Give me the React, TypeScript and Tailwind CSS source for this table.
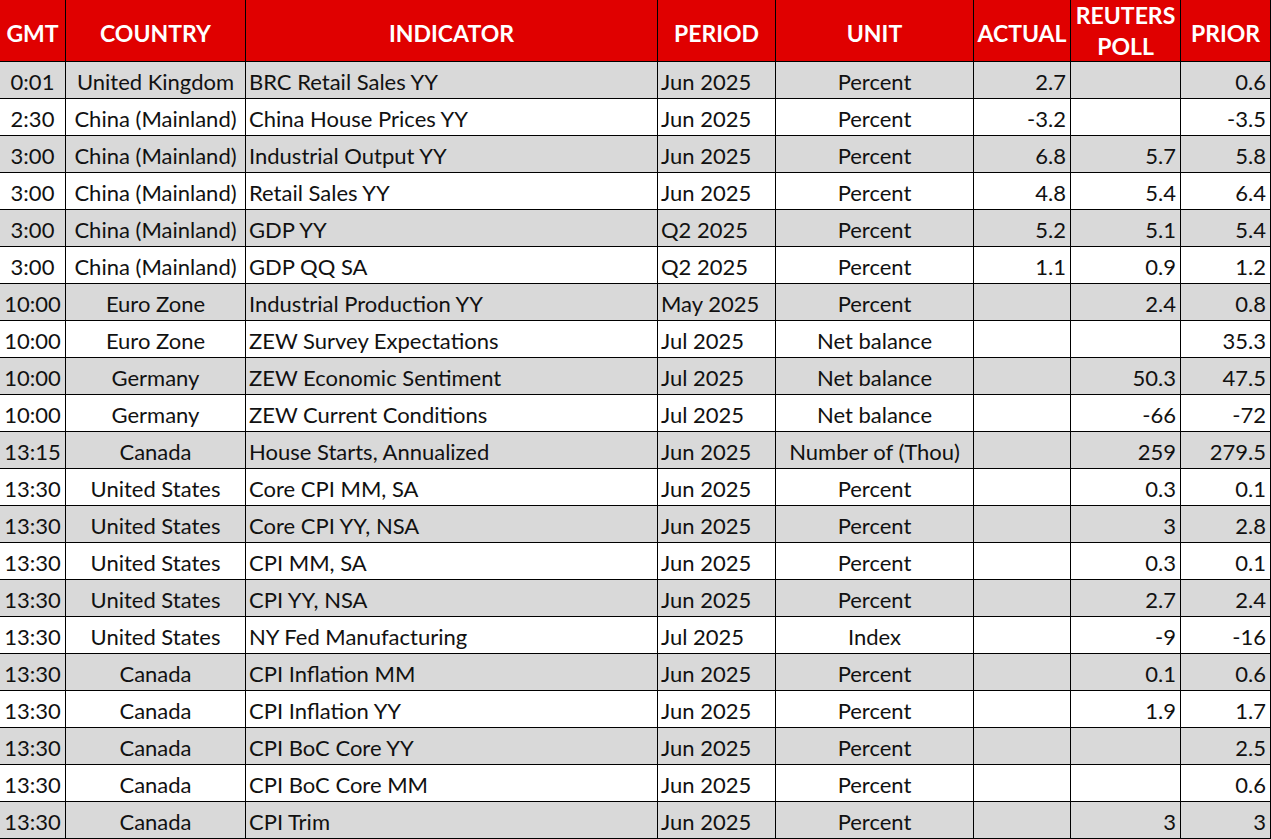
import React from 'react';

type Row = [string, string, string, string, string, string, string, string];

const rows: Row[] = [
  ['0:01', 'United Kingdom', 'BRC Retail Sales YY', 'Jun 2025', 'Percent', '2.7', '', '0.6'],
  ['2:30', 'China (Mainland)', 'China House Prices YY', 'Jun 2025', 'Percent', '-3.2', '', '-3.5'],
  ['3:00', 'China (Mainland)', 'Industrial Output YY', 'Jun 2025', 'Percent', '6.8', '5.7', '5.8'],
  ['3:00', 'China (Mainland)', 'Retail Sales YY', 'Jun 2025', 'Percent', '4.8', '5.4', '6.4'],
  ['3:00', 'China (Mainland)', 'GDP YY', 'Q2 2025', 'Percent', '5.2', '5.1', '5.4'],
  ['3:00', 'China (Mainland)', 'GDP QQ SA', 'Q2 2025', 'Percent', '1.1', '0.9', '1.2'],
  ['10:00', 'Euro Zone', 'Industrial Production YY', 'May 2025', 'Percent', '', '2.4', '0.8'],
  ['10:00', 'Euro Zone', 'ZEW Survey Expectations', 'Jul 2025', 'Net balance', '', '', '35.3'],
  ['10:00', 'Germany', 'ZEW Economic Sentiment', 'Jul 2025', 'Net balance', '', '50.3', '47.5'],
  ['10:00', 'Germany', 'ZEW Current Conditions', 'Jul 2025', 'Net balance', '', '-66', '-72'],
  ['13:15', 'Canada', 'House Starts, Annualized', 'Jun 2025', 'Number of (Thou)', '', '259', '279.5'],
  ['13:30', 'United States', 'Core CPI MM, SA', 'Jun 2025', 'Percent', '', '0.3', '0.1'],
  ['13:30', 'United States', 'Core CPI YY, NSA', 'Jun 2025', 'Percent', '', '3', '2.8'],
  ['13:30', 'United States', 'CPI MM, SA', 'Jun 2025', 'Percent', '', '0.3', '0.1'],
  ['13:30', 'United States', 'CPI YY, NSA', 'Jun 2025', 'Percent', '', '2.7', '2.4'],
  ['13:30', 'United States', 'NY Fed Manufacturing', 'Jul 2025', 'Index', '', '-9', '-16'],
  ['13:30', 'Canada', 'CPI Inflation MM', 'Jun 2025', 'Percent', '', '0.1', '0.6'],
  ['13:30', 'Canada', 'CPI Inflation YY', 'Jun 2025', 'Percent', '', '1.9', '1.7'],
  ['13:30', 'Canada', 'CPI BoC Core YY', 'Jun 2025', 'Percent', '', '', '2.5'],
  ['13:30', 'Canada', 'CPI BoC Core MM', 'Jun 2025', 'Percent', '', '', '0.6'],
  ['13:30', 'Canada', 'CPI Trim', 'Jun 2025', 'Percent', '', '3', '3'],
];

const align = [
  'justify-center',
  'justify-center',
  'justify-start pl-[3px]',
  'justify-start pl-[3px]',
  'justify-center',
  'justify-end pr-[4px]',
  'justify-end pr-[4px]',
  'justify-end pr-[4px]',
];

const headers = ['GMT', 'COUNTRY', 'INDICATOR', 'PERIOD', 'UNIT', 'ACTUAL', 'REUTERS POLL', 'PRIOR'];

export default function App() {
  return (
    <div className="w-[1271px] h-[839px] overflow-hidden bg-white font-['Lato','Open_Sans',sans-serif] text-black">
      <div className="grid grid-cols-[66px_180px_412px_118px_198px_97px_110px_90px]">
        {headers.map((h) =>
          h === 'REUTERS POLL' ? (
            <div
              key={h}
              className="h-[62px] bg-[#e00000] border-r border-b border-black flex items-center justify-center text-center text-white font-bold text-[23px] leading-[31px]"
            >
              <span>
                REUTERS
                <br />
                POLL
              </span>
            </div>
          ) : (
            <div
              key={h}
              className="h-[62px] pt-[5px] bg-[#e00000] border-r border-b border-black flex items-center justify-center text-center text-white font-bold text-[23px]"
            >
              {h}
            </div>
          )
        )}
        {rows.map((row, r) =>
          row.map((cell, c) => (
            <div
              key={`${r}-${c}`}
              className={`h-[37px] pt-[2px] border-r border-b border-black flex items-center whitespace-nowrap overflow-hidden text-[22px] text-[#111] ${align[c]} ${
                r % 2 === 0 ? 'bg-[#d9d9d9]' : 'bg-white'
              }`}
            >
              {cell}
            </div>
          ))
        )}
      </div>
    </div>
  );
}
